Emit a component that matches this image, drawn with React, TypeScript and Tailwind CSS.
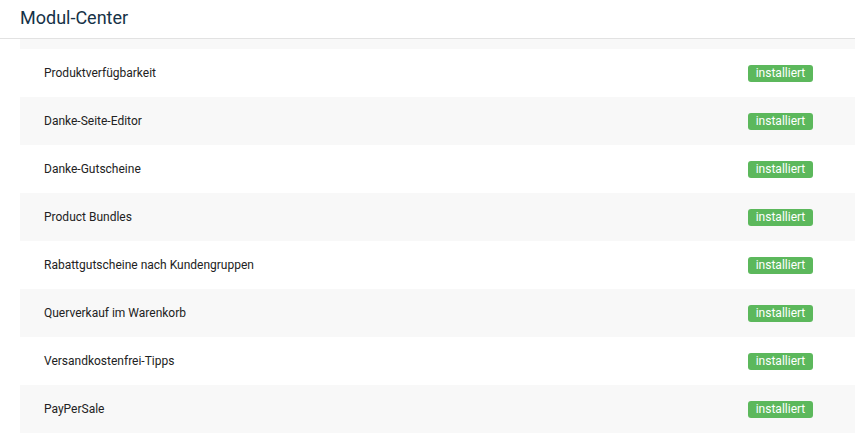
const modules = [
  'Produktverfügbarkeit',
  'Danke-Seite-Editor',
  'Danke-Gutscheine',
  'Product Bundles',
  'Rabattgutscheine nach Kundengruppen',
  'Querverkauf im Warenkorb',
  'Versandkostenfrei-Tipps',
  'PayPerSale',
];

export default function App() {
  return (
    <div className="w-[855px] h-[433px] overflow-hidden bg-white font-['Roboto',sans-serif]">
      <header className="h-[39px] border-b border-[#e2e2e2] px-5 flex items-center">
        <h1 className="text-[18px] text-[#163247] leading-none pb-[2px]">Modul-Center</h1>
      </header>
      <div className="pl-5">
        {/* tail of the row above, scrolled off */}
        <div className="h-[10px] bg-[#f8f8f8]" />
        {modules.map((name, i) => (
          <div
            key={name}
            className={`h-12 flex items-center justify-between pl-6 pr-[42px] ${i % 2 === 1 ? 'bg-[#f8f8f8]' : 'bg-white'}`}
          >
            <span className="text-[12px] text-[#222]">{name}</span>
            <span className="w-[65px] text-center bg-[#5cb85c] text-white text-[12px] leading-[17px] h-[17px] rounded-[3px]">installiert</span>
          </div>
        ))}
      </div>
    </div>
  );
}
